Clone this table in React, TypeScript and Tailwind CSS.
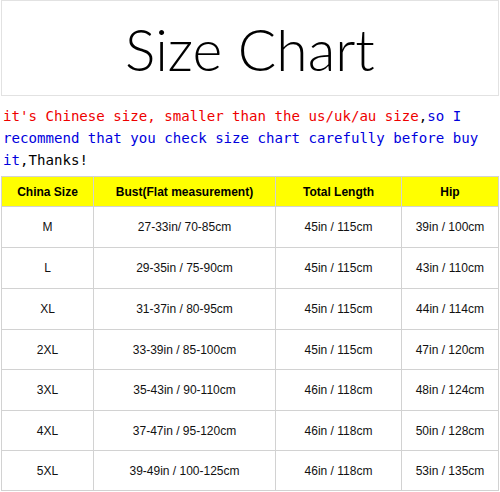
import React from "react";

const rows: [string, string, string, string][] = [
  ["M", "27-33in/ 70-85cm", "45in / 115cm", "39in / 100cm"],
  ["L", "29-35in / 75-90cm", "45in / 115cm", "43in / 110cm"],
  ["XL", "31-37in / 80-95cm", "45in / 115cm", "44in / 114cm"],
  ["2XL", "33-39in / 85-100cm", "45in / 115cm", "47in / 120cm"],
  ["3XL", "35-43in / 90-110cm", "46in / 118cm", "48in / 124cm"],
  ["4XL", "37-47in / 95-120cm", "46in / 118cm", "50in / 128cm"],
  ["5XL", "39-49in / 100-125cm", "46in / 118cm", "53in / 135cm"],
];

const headers = ["China Size", "Bust(Flat measurement)", "Total Length", "Hip"];

export default function App() {
  return (
    <div className="w-[500px] h-[492px] bg-white overflow-hidden">
      <div className="h-[96px] border-t border-l border-r border-b border-[#e2e2e2] ml-[1px] w-[498px] flex items-center justify-center">
        <h1 className="text-[57px] leading-none text-black font-light pt-[3px] [font-family:'Lato',sans-serif]">
          Size Chart
        </h1>
      </div>
      <div className="pl-[3px] pt-[9px] text-[14.1px] leading-[22px] [font-family:'DejaVu_Sans_Mono',monospace] whitespace-pre">
        <div>
          <span className="text-[#ee0000]">it's Chinese size, smaller than the us/uk/au size</span>
          <span className="text-black">,</span>
          <span className="text-[#0000dd]">so I</span>
        </div>
        <div className="text-[#0000dd]">recommend that you check size chart carefully before buy</div>
        <div>
          <span className="text-[#0000dd]">it</span>
          <span className="text-black">,Thanks!</span>
        </div>
      </div>
      <div
        className="mt-[5px] ml-[1px] w-[498px] grid grid-cols-[92px_182px_126px_97px] grid-rows-[30px_41px_41px_41px_40px_41px_40px_40px] border-t border-l border-[#d2d2d2] [font-family:'Liberation_Sans',sans-serif] text-[12px]"
      >
        {headers.map((h) => (
          <div
            key={h}
            className="bg-[#ffff00] border-r border-b border-[#d2d2d2] flex items-center justify-center font-bold text-black"
          >
            {h}
          </div>
        ))}
        {rows.map((r) =>
          r.map((c, i) => (
            <div
              key={r[0] + i}
              className="border-r border-b border-[#d2d2d2] flex items-center justify-center text-[#111]"
            >
              {c}
            </div>
          ))
        )}
      </div>
    </div>
  );
}
